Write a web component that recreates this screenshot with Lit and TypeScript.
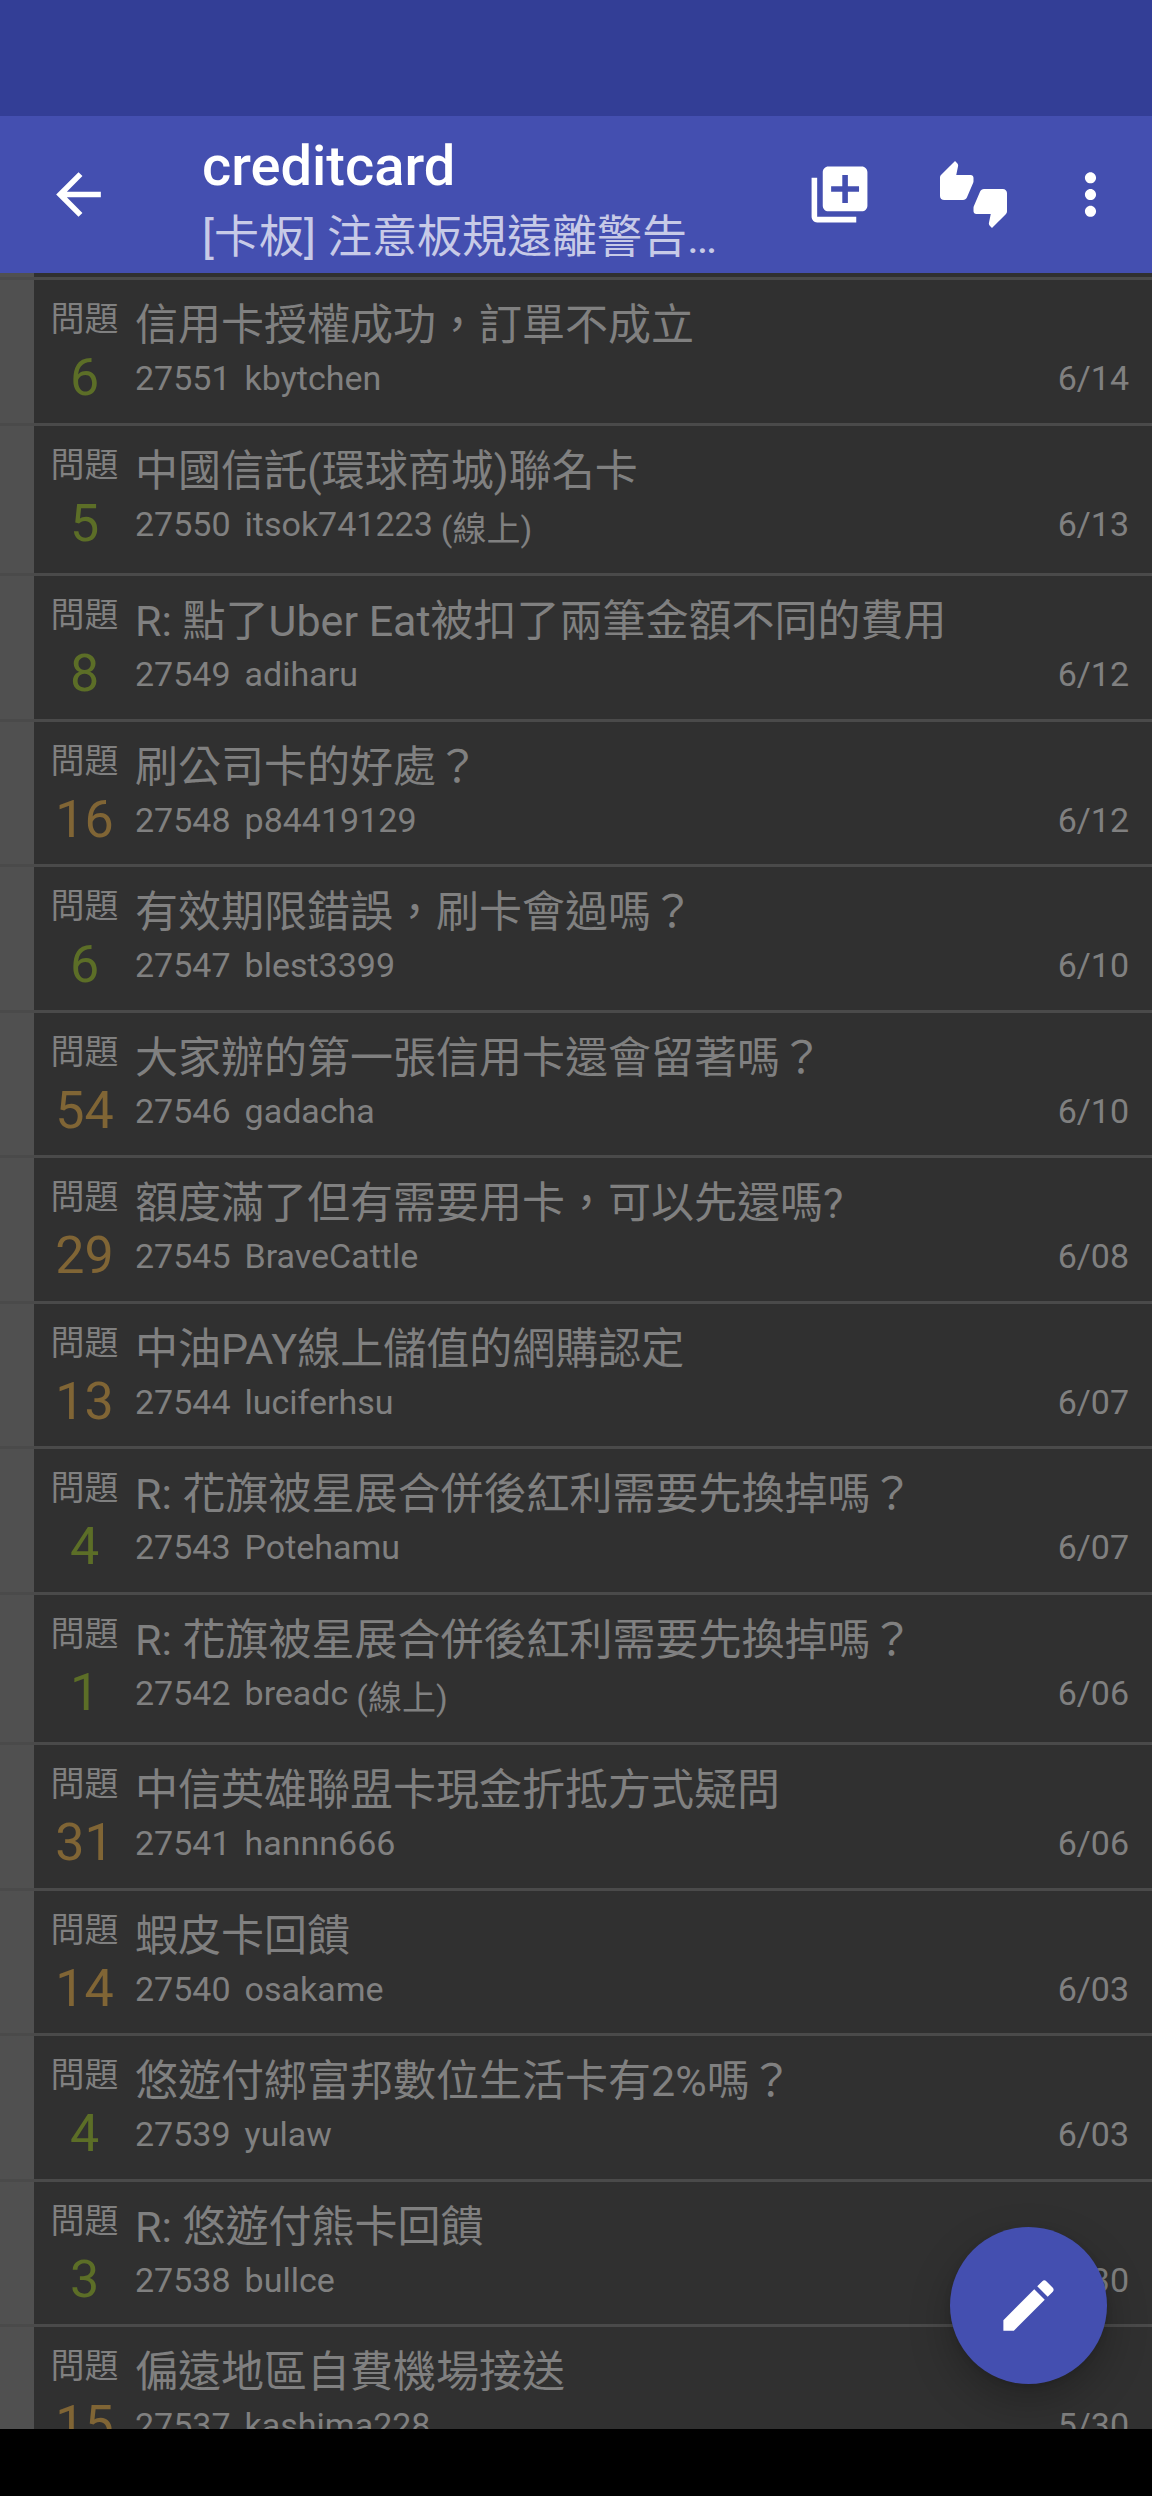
import { LitElement, html, css, svg } from "lit";
import { customElement, property } from "lit/decorators.js";
import { classMap } from "lit/directives/class-map.js";

interface Post {
  id: number;
  title: string;
  author: string;
  date: string;
  pushes: number;
  online?: boolean;
}

const POSTS: Post[] = [
  { id: 27551, title: "信用卡授權成功，訂單不成立", author: "kbytchen", date: "6/14", pushes: 6 },
  { id: 27550, title: "中國信託(環球商城)聯名卡", author: "itsok741223", date: "6/13", pushes: 5, online: true },
  { id: 27549, title: "R: 點了Uber Eat被扣了兩筆金額不同的費用", author: "adiharu", date: "6/12", pushes: 8 },
  { id: 27548, title: "刷公司卡的好處？", author: "p84419129", date: "6/12", pushes: 16 },
  { id: 27547, title: "有效期限錯誤，刷卡會過嗎？", author: "blest3399", date: "6/10", pushes: 6 },
  { id: 27546, title: "大家辦的第一張信用卡還會留著嗎？", author: "gadacha", date: "6/10", pushes: 54 },
  { id: 27545, title: "額度滿了但有需要用卡，可以先還嗎?", author: "BraveCattle", date: "6/08", pushes: 29 },
  { id: 27544, title: "中油PAY線上儲值的網購認定", author: "luciferhsu", date: "6/07", pushes: 13 },
  { id: 27543, title: "R: 花旗被星展合併後紅利需要先換掉嗎？", author: "Potehamu", date: "6/07", pushes: 4 },
  { id: 27542, title: "R: 花旗被星展合併後紅利需要先換掉嗎？", author: "breadc", date: "6/06", pushes: 1, online: true },
  { id: 27541, title: "中信英雄聯盟卡現金折抵方式疑問", author: "hannn666", date: "6/06", pushes: 31 },
  { id: 27540, title: "蝦皮卡回饋", author: "osakame", date: "6/03", pushes: 14 },
  { id: 27539, title: "悠遊付綁富邦數位生活卡有2%嗎？", author: "yulaw", date: "6/03", pushes: 4 },
  { id: 27538, title: "R: 悠遊付熊卡回饋", author: "bullce", date: "5/30", pushes: 3 },
  { id: 27537, title: "偏遠地區自費機場接送", author: "kashima228", date: "5/30", pushes: 15 },
];

const ICONS = {
  back: "M20 11H7.83l5.59-5.59L12 4l-8 8 8 8 1.41-1.41L7.83 13H20v-2z",
  add: "M4 6H2v14c0 1.1.9 2 2 2h14v-2H4V6zm16-4H8c-1.1 0-2 .9-2 2v12c0 1.1.9 2 2 2h12c1.1 0 2-.9 2-2V4c0-1.1-.9-2-2-2zm-1 9h-4v4h-2v-4H9V9h4V5h2v4h4v2z",
  thumbs:
    "M12 6c0-.55-.45-1-1-1H5.82l.66-3.18.02-.23c0-.31-.13-.59-.33-.8L5.38 0 .44 4.94C.17 5.21 0 5.59 0 6v6.5c0 .83.67 1.5 1.5 1.5h6.75c.62 0 1.15-.38 1.38-.91l2.26-5.29c.07-.17.11-.36.11-.55V6zm10.5 4h-6.75c-.62 0-1.15.38-1.38.91l-2.26 5.29c-.07.17-.11.36-.11.55V18c0 .55.45 1 1 1h5.18l-.66 3.18-.02.24c0 .31.13.59.33.8l.79.78 4.94-4.94c.27-.27.44-.65.44-1.06v-6.5c0-.83-.67-1.5-1.5-1.5z",
  more: "M12 8c1.1 0 2-.9 2-2s-.9-2-2-2-2 .9-2 2 .9 2 2 2zm0 2c-1.1 0-2 .9-2 2s.9 2 2 2 2-.9 2-2-.9-2-2-2zm0 6c-1.1 0-2 .9-2 2s.9 2 2 2 2-.9 2-2-.9-2-2-2z",
  edit: "M3 17.25V21h3.75L17.81 9.94l-3.75-3.75L3 17.25zM20.71 7.04c.39-.39.39-1.02 0-1.41l-2.34-2.34c-.39-.39-1.02-.39-1.41 0l-1.83 1.83 3.75 3.75 1.83-1.83z",
};

const icon = (name: keyof typeof ICONS) => html`
  <svg class="icon" viewBox="0 0 24 24" aria-hidden="true">${svg`<path d=${ICONS[name]}></path>`}</svg>
`;

@customElement("post-row")
export class PostRow extends LitElement {
  @property({ attribute: false }) post!: Post;

  static styles = css`
    :host {
      display: block;
    }
    .row {
      display: flex;
      padding-left: 34px;
      color: #808080;
      text-decoration: none;
      white-space: nowrap;
    }
    .tally {
      width: 101px;
      padding-top: 18px;
      display: flex;
      flex-direction: column;
      align-items: center;
      gap: 10px;
    }
    .label {
      font-size: 34px;
      line-height: 42px;
    }
    .count {
      font-size: 52px;
      line-height: 56px;
      color: #5c6e27;
    }
    .count.hot {
      color: #806535;
    }
    .body {
      flex: 1;
      min-width: 0;
      padding: 18px 23px 22px 0;
      display: flex;
      flex-direction: column;
      gap: 4px;
    }
    .title {
      font-size: 43px;
      line-height: 54px;
      overflow: hidden;
      text-overflow: ellipsis;
    }
    .meta {
      display: flex;
      align-items: flex-start;
      font-size: 34px;
      line-height: 44px;
    }
    .author {
      margin-left: 14px;
    }
    .online {
      margin-left: 8px;
      padding-top: 5px;
    }
    .date {
      margin-left: auto;
    }
  `;

  render() {
    const p = this.post;
    return html`
      <a class="row" href="#${p.id}">
        <span class="tally">
          <span class="label">問題</span>
          <span class=${classMap({ count: true, hot: p.pushes >= 10 })}>${p.pushes}</span>
        </span>
        <span class="body">
          <span class="title">${p.title}</span>
          <span class="meta">
            <span>${p.id}</span>
            <span class="author">${p.author}</span>
            ${p.online ? html`<span class="online">(線上)</span>` : null}
            <span class="date">${p.date}</span>
          </span>
        </span>
      </a>
    `;
  }
}

@customElement("app-root")
export class AppRoot extends LitElement {
  static styles = css`
    :host {
      display: flex;
      flex-direction: column;
      height: 100vh;
      background: #303030;
      font-family: Roboto, "Noto Sans CJK TC", sans-serif;
    }
    .status {
      height: 116px;
      flex: none;
      background: #333e96;
    }
    .toolbar {
      height: 157px;
      flex: none;
      box-sizing: border-box;
      padding-right: 11px;
      display: flex;
      align-items: center;
      background: #444fb0;
      color: #fff;
    }
    .button {
      flex: none;
      width: 134px;
      height: 134px;
      padding: 0;
      border: 0;
      background: none;
      color: inherit;
      display: flex;
      align-items: center;
      justify-content: center;
      cursor: pointer;
    }
    .button.back {
      width: 157px;
    }
    .button.more {
      width: 101px;
    }
    .icon {
      width: 67px;
      height: 67px;
      fill: currentColor;
    }
    .heading {
      flex: 1;
      min-width: 0;
      align-self: flex-start;
      padding: 14px 0 0 45px;
      white-space: nowrap;
    }
    .board,
    .notice {
      margin: 0;
      line-height: 72px;
      overflow: hidden;
      text-overflow: ellipsis;
    }
    .board {
      font-size: 56px;
      font-weight: 500;
    }
    .notice {
      font-size: 45px;
      color: #c7cae7;
    }
    .content {
      flex: 1;
      min-height: 0;
      position: relative;
      display: flex;
      flex-direction: column;
    }
    .list {
      flex: 1;
      min-height: 0;
      margin: 0;
      padding: 0;
      list-style: none;
      overflow-y: auto;
      scrollbar-width: none;
    }
    .item {
      border-bottom: 3px solid #4a4a4a;
      background: linear-gradient(to right, #505050 34px, transparent 34px);
    }
    .item:nth-child(even) {
      padding-bottom: 1px;
    }
    .item.passed {
      height: 4px;
    }
    .fab {
      position: absolute;
      right: 45px;
      bottom: 45px;
      width: 157px;
      height: 157px;
      padding: 0;
      border: 0;
      border-radius: 50%;
      background: #444fb0;
      color: #fff;
      display: flex;
      align-items: center;
      justify-content: center;
      box-shadow: 0 17px 40px rgba(0, 0, 0, 0.25), 0 2px 6px rgba(0, 0, 0, 0.1);
      cursor: pointer;
    }
    .navigation {
      height: 67px;
      flex: none;
      background: #000;
    }
  `;

  render() {
    return html`
      <div class="status"></div>
      <header class="toolbar">
        <button class="button back" aria-label="Back">${icon("back")}</button>
        <div class="heading">
          <h1 class="board">creditcard</h1>
          <p class="notice">[卡板] 注意板規遠離警告…</p>
        </div>
        <button class="button" aria-label="Add">${icon("add")}</button>
        <button class="button" aria-label="Votes">${icon("thumbs")}</button>
        <button class="button more" aria-label="More">${icon("more")}</button>
      </header>
      <main class="content">
        <ul class="list">
          <li class="item passed"></li>
          ${POSTS.map((post) => html`<li class="item"><post-row .post=${post}></post-row></li>`)}
        </ul>
        <button class="fab" aria-label="Write">${icon("edit")}</button>
      </main>
      <div class="navigation"></div>
    `;
  }
}
